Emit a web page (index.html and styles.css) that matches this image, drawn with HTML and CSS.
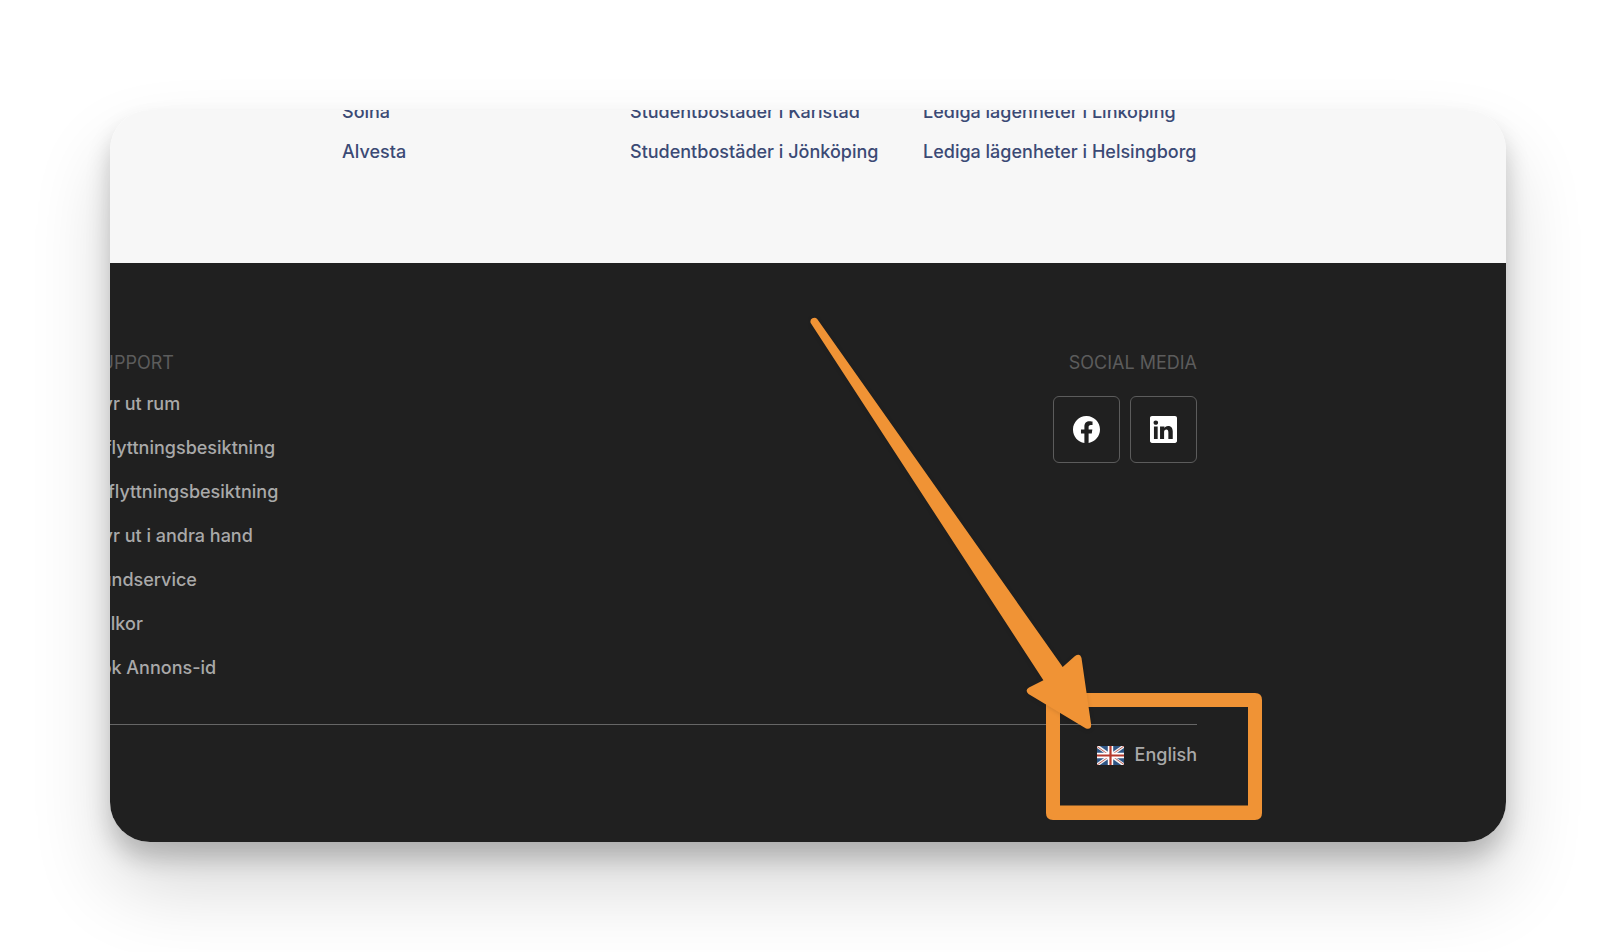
FILE: index.html
```html
<!DOCTYPE html>
<html lang="sv">
<head>
<meta charset="utf-8">
<meta name="viewport" content="width=device-width, initial-scale=1">
<title>Sidfot</title>
<link rel="stylesheet" href="styles.css">
</head>
<body>
<main class="card">
  <nav class="cities" aria-label="Orter">
    <ul class="link-list">
      <li><a href="#">Solna</a></li>
      <li><a href="#">Alvesta</a></li>
    </ul>
    <ul class="link-list">
      <li><a href="#">Studentbostäder i Karlstad</a></li>
      <li><a href="#">Studentbostäder i Jönköping</a></li>
    </ul>
    <ul class="link-list">
      <li><a href="#">Lediga lägenheter i Linköping</a></li>
      <li><a href="#">Lediga lägenheter i Helsingborg</a></li>
    </ul>
  </nav>
  <footer class="footer">
    <div class="footer-top">
      <section class="support">
        <h2 class="heading">SUPPORT</h2>
        <ul class="support-list">
          <li><a href="#">Hyr ut rum</a></li>
          <li><a href="#">Inflyttningsbesiktning</a></li>
          <li><a href="#">Utflyttningsbesiktning</a></li>
          <li><a href="#">Hyr ut i andra hand</a></li>
          <li><a href="#">Kundservice</a></li>
          <li><a href="#">Villkor</a></li>
          <li><a href="#">Sök Annons-id</a></li>
        </ul>
      </section>
      <section class="social">
        <h2 class="heading">SOCIAL MEDIA</h2>
        <div class="social-links">
          <a class="social-link" href="#" aria-label="Facebook">
            <svg class="social-icon" viewBox="0 0 16 16" aria-hidden="true"><path d="M16 8.049c0-4.446-3.582-8.05-8-8.05C3.58 0-.002 3.603-.002 8.05c0 4.017 2.926 7.347 6.75 7.951v-5.625h-2.03V8.05H6.75V6.275c0-2.017 1.195-3.131 3.022-3.131.876 0 1.791.157 1.791.157v1.98h-1.009c-.993 0-1.303.621-1.303 1.258v1.51h2.218l-.354 2.326H9.25V16c3.824-.604 6.75-3.934 6.75-7.951z"/></svg>
          </a>
          <a class="social-link" href="#" aria-label="LinkedIn">
            <svg class="social-icon" viewBox="0 0 16 16" aria-hidden="true"><path d="M0 1.146C0 .513.526 0 1.175 0h13.65C15.474 0 16 .513 16 1.146v13.708c0 .633-.526 1.146-1.175 1.146H1.175C.526 16 0 15.487 0 14.854V1.146zm4.543 12.448V6.169H2.342v7.425h2.201zm-1.100-8.412c.837 0 1.358-.554 1.358-1.248-.015-.709-.52-1.248-1.342-1.248-.822 0-1.359.54-1.359 1.248 0 .694.521 1.248 1.327 1.248h.016zm4.908 8.412V9.459c0-.216.016-.432.08-.586.173-.431.568-.878 1.232-.878.869 0 1.216.662 1.216 1.634v3.965h2.601V9.250c0-2.220-1.184-3.252-2.764-3.252-1.274 0-1.845.7-2.165 1.193V6.169H5.951v7.425h2.400z"/></svg>
          </a>
        </div>
      </section>
    </div>
    <div class="footer-bottom">
      <a class="language" href="#">
        <svg class="flag" viewBox="0 0 27 19" aria-hidden="true">
          <path fill="#2f5585" d="M0 0h27v19H0z"/>
          <path stroke="#f4f4f4" stroke-width="3.2" d="M0 0l27 19M27 0L0 19"/>
          <path stroke="#c0625a" stroke-width="1" d="M0 .5l12 8.500M27 0L15 8.500M0 19L12 10.500M27 18.500L15 10"/>
          <path stroke="#fff" stroke-width="5.4" d="M13.500 0v19M0 9.500h27"/>
          <path stroke="#b5392c" stroke-width="2.2" d="M13.500 0v19M0 9.500h27"/>
        </svg>
        <span>English</span>
      </a>
    </div>
  </footer>
  <svg class="annotation" viewBox="808 316 456 506" aria-hidden="true">
    <path class="annotation-fill" fill-rule="evenodd" d="M1053 693H1255Q1262 693 1262 700V813Q1262 820 1255 820H1053Q1046 820 1046 813V700Q1046 693 1053 693ZM1060 707V805.500H1248V707Z"/>
    <path class="annotation-fill annotation-arrow" d="M817.200 319 L1062.700 667 L1075 656 Q1080 652.500 1081.500 658 L1091.200 725 Q1091 730 1086 728.500 L1028.500 694 Q1024.500 690.500 1029 687.500 L1043.400 680.300 L810.700 323 A3.900 3.900 0 0 1 817.200 319 Z"/>
  </svg>
</main>
</body>
</html>
```
FILE: styles.css
```css
* {
  box-sizing: border-box;
}

body {
  margin: 0;
  padding: 110px;
  background: #fff;
  font-family: Inter, "Liberation Sans", sans-serif;
  font-size: 18px;
  font-weight: 500;
}

a {
  color: inherit;
  text-decoration: none;
}

ul {
  margin: 0;
  padding: 0;
  list-style: none;
}

.card {
  position: relative;
  overflow: hidden;
  border-radius: 40px;
  box-shadow: 0 16px 24px rgba(0, 0, 0, 0.2), 0 44px 80px rgba(0, 0, 0, 0.16);
}

.cities {
  display: grid;
  grid-template-columns: 288fr 293fr 274fr;
  padding: 0 309px 91px 232px;
  background: #f7f7f7;
  color: #3b4a75;
  line-height: 40px;
  white-space: nowrap;
}

.link-list {
  margin-top: -18px;
}

.footer {
  padding: 89px 309px 76px 0;
  background: #202020;
  color: #a9a9a9;
  white-space: nowrap;
}

.footer-top {
  display: flex;
  justify-content: space-between;
  padding-bottom: 34px;
  border-bottom: 1px solid #666;
}

.support {
  margin-left: -21px;
}

.heading {
  margin: 0;
  color: #5c5c5c;
  font-size: 18px;
  font-weight: 400;
  line-height: 22px;
}

.support-list {
  padding-top: 8px;
  line-height: 44px;
}

.social {
  display: flex;
  flex-direction: column;
  align-items: flex-end;
  gap: 22px;
}

.social-links {
  display: flex;
  gap: 10px;
}

.social-link {
  display: grid;
  place-items: center;
  width: 67px;
  height: 67px;
  border: 1px solid #5c5c5c;
  border-radius: 6px;
}

.social-icon {
  width: 27px;
  height: 27px;
  fill: #fff;
}

.footer-bottom {
  display: flex;
  justify-content: flex-end;
  padding-top: 19px;
}

.language {
  display: flex;
  align-items: center;
  gap: 11px;
  line-height: 22px;
}

.flag {
  width: 27px;
  height: 19px;
}

.annotation {
  position: absolute;
  top: 206px;
  right: 242px;
  width: 456px;
  height: 506px;
  pointer-events: none;
}

.annotation-fill {
  fill: #f09335;
}

.annotation-arrow {
  filter: drop-shadow(0 1px 2px rgba(0, 0, 0, 0.12));
}
```
